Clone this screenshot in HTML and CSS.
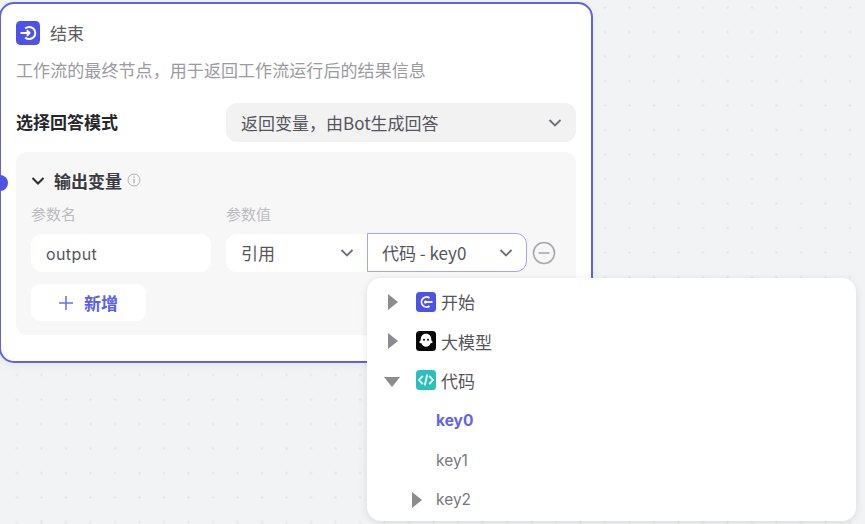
FILE: index.html
```html
<!DOCTYPE html>
<html lang="zh-CN">
<head>
  <meta charset="UTF-8" />
  <meta name="viewport" content="width=device-width, initial-scale=1.0" />
  <title>结束节点</title>
  <link rel="stylesheet" href="styles.css">
</head>
<body>
  <div class="canvas">
    <div class="node">
      <span class="handle"></span>
      <div class="node-head">
        <svg class="node-icon" viewBox="0 0 24 24">
          <rect width="24" height="24" rx="4.5" fill="#4d53e8"/>
          <path d="M9.2 7.6a6 6 0 1 1 0 8.800" fill="none" stroke="#fff" stroke-width="2"/>
          <path d="M4.500 12h9M10.800 9.200l2.800 2.800-2.800 2.800" fill="none" stroke="#fff" stroke-width="2" stroke-linejoin="round"/>
        </svg>
        <span class="node-title">结束</span>
      </div>
      <p class="node-desc">工作流的最终节点，用于返回工作流运行后的结果信息</p>

      <div class="mode-row">
        <span class="mode-label">选择回答模式</span>
        <div class="select mode-select">
          <span>返回变量，由Bot生成回答</span>
          <svg class="chev" viewBox="0 0 14 14"><path d="M1.500 4l5.500 5.500L12.500 4"/></svg>
        </div>
      </div>

      <div class="panel">
        <div class="panel-head">
          <svg class="chev chev-dark" viewBox="0 0 14 14"><path d="M1.500 4l5.500 5.500L12.500 4"/></svg>
          <span class="panel-title">输出变量</span>
          <svg class="info" viewBox="0 0 14 14">
            <circle cx="7" cy="7" r="6" fill="none" stroke="#b5b5b8" stroke-width="1"/>
            <path d="M7 6v4.200M7 3.600v1.200" stroke="#a5a5a8" stroke-width="1.200"/>
          </svg>
        </div>
        <div class="param-labels">
          <span class="col-name">参数名</span>
          <span>参数值</span>
        </div>
        <div class="param-row">
          <div class="field col-name">output</div>
          <div class="select ref-type">
            <span>引用</span>
            <svg class="chev" viewBox="0 0 14 14"><path d="M1.500 4l5.500 5.500L12.500 4"/></svg>
          </div>
          <div class="select ref-value">
            <span>代码 - key0</span>
            <svg class="chev" viewBox="0 0 14 14"><path d="M1.500 4l5.500 5.500L12.500 4"/></svg>
          </div>
          <svg class="remove" viewBox="0 0 24 24">
            <circle cx="12" cy="12" r="10.500" fill="none" stroke="#a8a8ac" stroke-width="1.600"/>
            <path d="M6.500 12h11" stroke="#a8a8ac" stroke-width="1.600"/>
          </svg>
        </div>
        <div class="add-btn">
          <svg class="plus" viewBox="0 0 14 14"><path d="M7 0v14M0 7h14"/></svg>
          <span>新增</span>
        </div>
      </div>
    </div>

    <div class="menu">
      <div class="menu-row">
        <span class="arrow"></span>
        <svg class="menu-icon" viewBox="0 0 20 20">
          <rect width="20" height="20" rx="3.500" fill="#4d53e8"/>
          <path d="M13.500 6a5 5 0 1 0 0 8" fill="none" stroke="#fff" stroke-width="1.800"/>
          <circle cx="9.500" cy="10" r="1.600" fill="#fff"/>
          <path d="M9.500 10h7" stroke="#fff" stroke-width="1.800"/>
        </svg>
        <span>开始</span>
      </div>
      <div class="menu-row">
        <span class="arrow"></span>
        <svg class="menu-icon" viewBox="0 0 20 20">
          <rect width="20" height="20" rx="3.500" fill="#050505"/>
          <path d="M10 2.800c3.500 0 5.300 2.500 5.300 5.600 0 1 .6 1.900 1.700 2.500-.6.900-1.500 1.300-2.400 1.300-.7 2.100-2.400 3.600-4.600 3.600s-3.900-1.500-4.600-3.600c-.9 0-1.800-.4-2.400-1.300 1.100-.6 1.700-1.500 1.700-2.500 0-3.100 1.800-5.600 5.300-5.600z" fill="#fff"/>
          <circle cx="8" cy="8.800" r="1" fill="#050505"/>
          <circle cx="12" cy="8.800" r="1" fill="#050505"/>
        </svg>
        <span>大模型</span>
      </div>
      <div class="menu-row">
        <span class="arrow arrow-open"></span>
        <svg class="menu-icon" viewBox="0 0 20 20">
          <rect width="20" height="20" rx="3.500" fill="#27c0bd"/>
          <path d="M6.800 5.800L3 10l3.800 4.200M13.200 5.800L17 10l-3.800 4.200M11.200 4.500L8.800 15.500" fill="none" stroke="#fff" stroke-width="1.800"/>
        </svg>
        <span>代码</span>
      </div>
      <div class="menu-row sub-row active">key0</div>
      <div class="menu-row sub-row">key1</div>
      <div class="menu-row sub-row">
        <span class="arrow sub-arrow"></span>
        key2
      </div>
    </div>
  </div>
</body>
</html>
```

FILE: styles.css
```css
* {
  box-sizing: border-box;
}
body {
  margin: 0;
  font-family: "Noto Sans CJK SC", "Inter", sans-serif;
  color: #55555b;
}
.canvas {
  position: relative;
  width: 865px;
  height: 524px;
  overflow: hidden;
  background-color: #f2f3f5;
  background-image: radial-gradient(circle, #e6e7ea 1px, transparent 1.5px);
  background-size: 24.5px 24.5px;
  background-position: 4.75px 19.75px;
}

/* node card */
.node {
  position: absolute;
  left: -1px;
  top: 2px;
  width: 594px;
  height: 361px;
  padding: 17px 15px 0 15px;
  background: #fff;
  border: 2px solid #5f62e6;
  border-radius: 15px;
  box-shadow: 0 3px 10px rgba(0, 0, 0, 0.05);
}
.handle {
  position: absolute;
  left: -9px;
  top: 171px;
  width: 16px;
  height: 16px;
  border-radius: 50%;
  background: #4d53e8;
}
.node-head {
  display: flex;
  align-items: center;
  gap: 10px;
  height: 24px;
}
.node-icon {
  width: 24px;
  height: 24px;
}
.node-title {
  margin-bottom: 2px;
  font-size: 17px;
  color: #5c5c62;
}
.node-desc {
  margin: 13px 0 0;
  font-size: 17px;
  letter-spacing: 0.08px;
  line-height: 24px;
  color: #9b9ba0;
}
.mode-row {
  display: flex;
  align-items: center;
  justify-content: space-between;
  margin-top: 21px;
}
.mode-label {
  margin-bottom: 2px;
  font-size: 17px;
  font-weight: 700;
  color: #26262b;
}
.select {
  display: flex;
  align-items: center;
  justify-content: space-between;
  font-size: 17px;
}
.mode-select {
  width: 350px;
  height: 39px;
  padding: 0 14px 0 15px;
  background: #f2f2f3;
  border-radius: 11px;
}
.chev {
  width: 14px;
  height: 14px;
  fill: none;
  stroke: #6e6e74;
  stroke-width: 1.8;
}
.chev-dark {
  stroke: #2b2b30;
  stroke-width: 2;
}

/* output variables panel */
.panel {
  height: 183px;
  margin-top: 10px;
  padding: 15px 15px 0;
  background: #f7f7f8;
  border-radius: 11px;
}
.panel-head {
  display: flex;
  align-items: center;
  height: 28px;
}
.panel-title {
  margin: 0 0 2px 9px;
  font-size: 17px;
  font-weight: 700;
  color: #3a3a40;
}
.info {
  width: 14px;
  height: 14px;
  margin: 0 0 2px 5px;
}
.param-labels {
  display: flex;
  margin-top: 8px;
  font-size: 15px;
  line-height: 22px;
  color: #bcbcc0;
}
.col-name {
  width: 180px;
  margin-right: 15px;
}
.param-row {
  display: flex;
  align-items: center;
  margin-top: 8px;
}
.field {
  height: 38px;
  padding-left: 15px;
  background: #fff;
  border-radius: 11px;
  font-family: "Inter", sans-serif;
  font-size: 16px;
  letter-spacing: 0.4px;
  line-height: 41px;
}
.ref-type {
  width: 141px;
  height: 38px;
  padding: 0 13px 0 15px;
  background: #fff;
  border-radius: 11px 0 0 11px;
}
.ref-value {
  width: 160px;
  height: 39px;
  padding: 0 13px 0 14px;
  background: #fff;
  border: 1.5px solid #a3a6f2;
  border-radius: 0 11px 11px 0;
}
.remove {
  width: 24px;
  height: 24px;
  margin-left: 5px;
}
.add-btn {
  display: flex;
  align-items: center;
  justify-content: center;
  gap: 11px;
  width: 115px;
  height: 37px;
  margin-top: 12px;
  background: #fff;
  border-radius: 9px;
  font-size: 17px;
  font-weight: 700;
  color: #5a5fe6;
}
.plus {
  width: 14px;
  height: 14px;
  stroke: #6a6eea;
  stroke-width: 1.5;
}

/* dropdown tree */
.menu {
  position: absolute;
  left: 367px;
  top: 278px;
  width: 489px;
  height: 243px;
  padding-top: 4px;
  background: #fff;
  border-radius: 14px;
  box-shadow: 0 2px 8px rgba(0, 0, 0, 0.1);
  font-size: 17px;
}
.menu-row {
  display: flex;
  align-items: center;
  height: 39.4px;
  padding-left: 20px;
  color: #55555b;
}
.menu-icon {
  width: 20px;
  height: 20px;
  margin: 0 5px 0 18px;
}
.arrow {
  width: 0;
  height: 0;
  margin-left: 1px;
  border-top: 8px solid transparent;
  border-bottom: 8px solid transparent;
  border-left: 10px solid #8b8b90;
}
.arrow-open {
  margin: 3px -2px 0 -3px;
  border-left: 8px solid transparent;
  border-right: 8px solid transparent;
  border-top: 10px solid #8b8b90;
  border-bottom: 0;
}
.sub-row {
  padding: 2px 0 0 69px;
  font-family: "Inter", sans-serif;
  font-size: 15.5px;
  color: #77777c;
}
.sub-row.active {
  font-weight: 700;
  color: #6265ea;
}
.sub-arrow {
  position: absolute;
  left: 45px;
  margin: 0;
}
```
